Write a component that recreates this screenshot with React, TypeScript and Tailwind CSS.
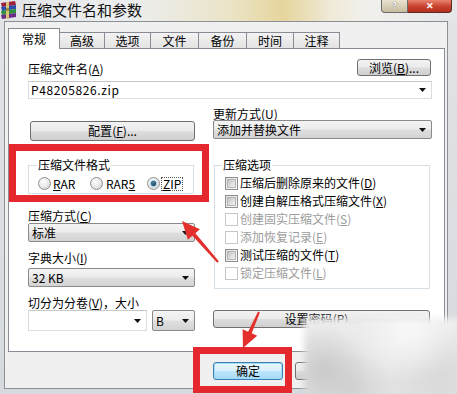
import React from "react";

function Acc({ c }: { c: string }) {
  return (
    <>
      (<span className="underline underline-offset-1">{c}</span>)
    </>
  );
}

function Arrow() {
  return (
    <svg width="7" height="4" viewBox="0 0 7 4" className="shrink-0">
      <polygon points="0,0 7,0 3.5,4" fill="#111" />
    </svg>
  );
}

function WinButton({ children, className }: { children: React.ReactNode; className: string }) {
  return (
    <div
      className={
        "flex items-center justify-center rounded-[3px] border border-[#707070] bg-[linear-gradient(#f2f2f2_0%,#ebebeb_48%,#dddddd_52%,#cfcfcf_100%)] text-[12px] leading-[14px] " +
        className
      }
    >
      {children}
    </div>
  );
}

function DropList({ text, className }: { text: string; className: string }) {
  return (
    <div
      className={
        "flex items-center justify-between rounded-[2px] border border-[#8a8a8a] bg-[linear-gradient(#f4f4f4_0%,#ececec_48%,#dfdfdf_52%,#d3d3d3_100%)] pl-[3px] pr-[5px] " +
        className
      }
    >
      <span>{text}</span>
      <Arrow />
    </div>
  );
}

function EditCombo({ text, className }: { text: string; className: string }) {
  return (
    <div
      className={
        "flex items-center justify-between border border-[#dcdcdc] border-t-[#c8c8c8] bg-white pl-[2px] pr-[5px] " +
        className
      }
    >
      <span className="tracking-[0.6px]">{text}</span>
      <Arrow />
    </div>
  );
}

function Radio({ checked }: { checked?: boolean }) {
  return (
    <span className="flex h-[13px] w-[13px] shrink-0 items-center justify-center rounded-full border border-[#8e8f8f] bg-[radial-gradient(circle_at_40%_35%,#ffffff_0%,#e6e6e6_55%,#c9c9c9_100%)]">
      {checked && (
        <span className="h-[7px] w-[7px] rounded-full border border-[#7fc4e6] bg-[radial-gradient(circle_at_40%_35%,#4f7f9a_0%,#0f2f44_100%)]" />
      )}
    </span>
  );
}

function Check({ disabled }: { disabled?: boolean }) {
  return disabled ? (
    <span className="h-[13px] w-[13px] shrink-0 border border-[#c7c7c7] bg-white" />
  ) : (
    <span className="flex h-[13px] w-[13px] shrink-0 items-center justify-center border border-[#8f8f8f] bg-[linear-gradient(135deg,#e0e0e0,#fbfbfb)]">
      <span className="h-[9px] w-[9px] border border-[#b4b4b4] bg-[linear-gradient(135deg,#c4c4c4,#f2f2f2)]" />
    </span>
  );
}

function CheckRow({ label, acc, disabled }: { label: string; acc: string; disabled?: boolean }) {
  return (
    <div className="flex h-[18px] items-center gap-[2px]">
      <Check disabled={disabled} />
      <span className={disabled ? "text-[#9c9c9c]" : "text-black"}>
        {label}
        <Acc c={acc} />
      </span>
    </div>
  );
}

function RarIcon() {
  return (
    <svg width="18" height="19" viewBox="0 0 18 19" className="mt-[1px] shrink-0">
      <polygon points="1,2 15,0 16,4 2,6" fill="#9d1f3a" />
      <polygon points="1,6 16,4 16,8 2,10" fill="#2b4fae" />
      <polygon points="1,10 16,8 16,12 2,14" fill="#2f8f3c" />
      <polygon points="1,14 16,12 16,16 2,18" fill="#6a2c86" />
      <rect x="6" y="1" width="3" height="17" fill="#d8c27a" />
      <rect x="6" y="7" width="3" height="3" fill="#a38a3e" />
    </svg>
  );
}

const tabs = [
  { t: "高级", w: "w-[46px]" },
  { t: "选项", w: "w-[47px]" },
  { t: "文件", w: "w-[49px]" },
  { t: "备份", w: "w-[49px]" },
  { t: "时间", w: "w-[48px]" },
  { t: "注释", w: "w-[47px]" },
];

export default function App() {
  return (
    <div className="relative h-[394px] w-[457px] overflow-hidden bg-[linear-gradient(180deg,#e2e4e7_0%,#d6d9dd_100%)] font-['Noto_Sans_CJK_SC',sans-serif] text-[12px] leading-[14px] text-black">
      {/* Title bar */}
      <div className="flex h-[21px] items-start bg-[linear-gradient(90deg,#e1e3e6_0%,#eceef0_28%,#ebe4c8_50%,#e6d59c_62%,#efe9d6_72%,#f1f0ec_80%,#e4e6e9_100%)]">
        <RarIcon />
        <span className="ml-[4px] text-[15px] leading-[20px] text-[#111]">压缩文件名和参数</span>
        <div className="ml-auto mr-[5px] flex">
          <div className="flex h-[13px] w-[27px] items-center justify-center rounded-bl-[4px] border border-t-0 border-[#6b6b6b] bg-[linear-gradient(#e9e2d0,#c9bd9f)] text-[9px] font-bold leading-[12px] text-white [text-shadow:0_0_1px_#333]">
            ?
          </div>
          <div className="flex h-[13px] w-[44px] items-center justify-center rounded-br-[4px] border border-l-0 border-t-0 border-[#5b2a22] bg-[linear-gradient(#e8836f,#c7402c_55%,#b52f1e)] text-[9px] font-bold leading-[12px] text-white">
            ✕
          </div>
        </div>
      </div>

      {/* Client area */}
      <div className="ml-[4px] flex h-[368px] w-[444px] flex-col border border-[#8b9097] bg-[#f0f0f0]">
        {/* Tabs */}
        <div className="flex h-[26px] items-end pl-[3px]">
          <div className="relative z-10 -mb-px flex h-[21px] w-[52px] items-center justify-center border border-b-0 border-[#898c95] bg-white">
            常规
          </div>
          {tabs.map((tab) => (
            <div
              key={tab.t}
              className={
                "-ml-px flex h-[16px] items-center justify-center border border-b-0 border-[#898c95] bg-[linear-gradient(#f3f3f3,#e3e3e3)] pt-[1px] " +
                tab.w
              }
            >
              {tab.t}
            </div>
          ))}
        </div>

        {/* Panel */}
        <div className="ml-[3px] flex h-[304px] w-[437px] flex-col border border-[#898c95] bg-white pl-[19px] pr-[12px] pt-[10px]">
          <div className="flex h-[17px] items-end justify-between">
            <span>
              压缩文件名<Acc c="A" />
            </span>
            <WinButton className="mr-px h-[17px] w-[74px]">
              <span>
                浏览<Acc c="B" />...
              </span>
            </WinButton>
          </div>
          <EditCombo text="P48205826.zip" className="mt-[5px] h-[18px] w-full" />

          <div className="flex gap-[18px]">
            {/* Left column */}
            <div className="flex w-[167px] flex-col">
              <WinButton className="ml-[2px] mt-[22px] h-[20px] w-[165px]">
                <span>
                  配置<Acc c="F" />...
                </span>
              </WinButton>
              <fieldset className="mt-[17px] w-[166px] border border-[#d5dfe5] pb-[2px] pl-[8px] pt-[4px]">
                <legend className="px-[1px] leading-[14px]">压缩文件格式</legend>
                <div className="flex h-[15px] items-center pl-[1px]">
                  <div className="flex w-[52px] items-center gap-[2px]">
                    <Radio />
                    <span>
                      <span className="underline underline-offset-1">R</span>AR
                    </span>
                  </div>
                  <div className="flex w-[57px] items-center gap-[3px]">
                    <Radio />
                    <span>
                      RAR<span className="underline underline-offset-1">5</span>
                    </span>
                  </div>
                  <div className="flex items-center gap-[1px]">
                    <Radio checked />
                    <span className="border border-dotted border-[#555] px-[1px] leading-[12px]">
                      <span className="underline underline-offset-1">Z</span>IP
                    </span>
                  </div>
                </div>
              </fieldset>
              <span className="mt-[15px]">
                压缩方式<Acc c="C" />
              </span>
              <DropList text="标准" className="h-[19px] w-[167px]" />
              <span className="mt-[9px]">
                字典大小<Acc c="I" />
              </span>
              <DropList text="32 KB" className="mt-[3px] h-[19px] w-[167px]" />
              <span className="mt-[9px]">
                切分为分卷<Acc c="V" />，大小
              </span>
              <div className="flex h-[21px] gap-[5px]">
                <EditCombo text="" className="h-[21px] w-[119px]" />
                <DropList text="B" className="h-[21px] w-[43px]" />
              </div>
            </div>

            {/* Right column */}
            <div className="flex w-[219px] flex-col">
              <span className="mt-[9px] leading-[12px]">
                更新方式<Acc c="U" />
              </span>
              <DropList text="添加并替换文件" className="h-[19px] w-[219px]" />
              <fieldset className="ml-px mt-[19px] w-[216px] border border-[#d5dfe5] pb-[6px] pl-[10px] pt-[2px]">
                <legend className="-ml-[3px] px-[1px] leading-[14px]">压缩选项</legend>
                <CheckRow label="压缩后删除原来的文件" acc="D" />
                <CheckRow label="创建自解压格式压缩文件" acc="X" />
                <CheckRow label="创建固实压缩文件" acc="S" disabled />
                <CheckRow label="添加恢复记录" acc="E" disabled />
                <CheckRow label="测试压缩的文件" acc="T" />
                <CheckRow label="锁定压缩文件" acc="L" disabled />
              </fieldset>
              <WinButton className="mt-[21px] h-[18px] w-[217px]">
                <span>
                  设置密码<Acc c="P" />...
                </span>
              </WinButton>
            </div>
          </div>
        </div>

        {/* Bottom buttons */}
        <div className="ml-[208px] mt-[10px] flex gap-[12px]">
          <div className="flex h-[18px] w-[70px] items-center justify-center rounded-[3px] border border-[#3c7fb1] bg-[linear-gradient(#eaf6fd_0%,#d9f0fc_48%,#bee6fd_52%,#a7d9f5_100%)] shadow-[inset_0_0_0_1px_#9fdcf7]">
            确定
          </div>
          <WinButton className="h-[18px] w-[70px]">取消</WinButton>
        </div>
      </div>

      {/* Blurred watermark region */}
      <div className="absolute left-[304px] top-[318px] h-[80px] w-[160px] bg-[radial-gradient(circle_at_12%_65%,#c9c9c9_0,transparent_30%),radial-gradient(circle_at_30%_90%,#d2d2d2_0,transparent_30%),radial-gradient(circle_at_65%_15%,#f8f8f8_0,transparent_40%),radial-gradient(circle_at_85%_75%,#d9d9d9_0,transparent_35%),linear-gradient(#ededed,#e1e1e1)] blur-[3px]" />

      {/* Red annotation boxes */}
      <div className="absolute left-[9px] top-[144px] h-[58px] w-[200px] border-[7px] border-[#e4282d]" />
      <div className="absolute left-[193px] top-[347px] h-[46px] w-[99px] border-[7px] border-[#e4282d]" />

      {/* Red arrows */}
      <svg className="absolute left-0 top-0" width="457" height="394" viewBox="0 0 457 394">
        <polygon
          points="182,221 199.9,229.2 195.4,233.2 218.8,261.3 217.2,262.7 192.4,235.8 187.9,239.8"
          fill="#e3302c"
        />
        <polygon
          points="243,348 257.2,335.7 251.7,333.3 259.9,312.4 258.1,311.6 248.1,331.7 242.6,329.3"
          fill="#e3302c"
        />
      </svg>
    </div>
  );
}
